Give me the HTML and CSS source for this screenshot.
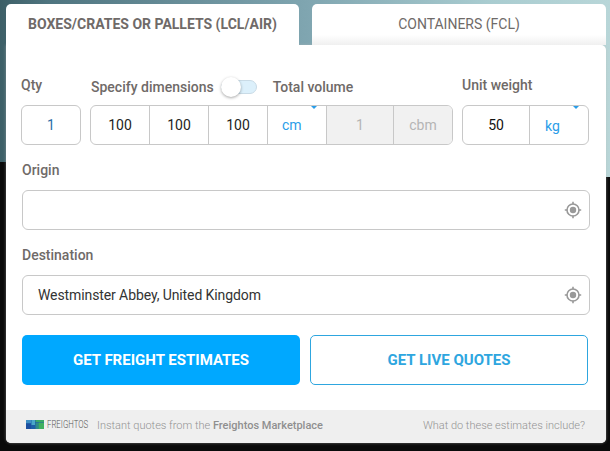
FILE: index.html
```html
<!DOCTYPE html>
<html lang="en">
<head>
<meta charset="utf-8">
<title>Freight estimates</title>
<link rel="stylesheet" href="styles.css">
</head>
<body>
<div class="widget">
  <div class="tabs">
    <div class="tab tab-active">BOXES/CRATES OR PALLETS (LCL/AIR)</div>
    <div class="tab tab-idle">CONTAINERS (FCL)</div>
  </div>
  <div class="card">
    <div class="form">
      <div class="units">
        <div class="col col-qty">
          <div class="label label-qty">Qty</div>
          <div class="box"><div class="cell cell-qty">1</div></div>
        </div>
        <div class="col col-dims">
          <div class="label-row">
            <span class="label">Specify dimensions</span>
            <span class="toggle"><span class="knob"></span></span>
            <span class="label">Total volume</span>
          </div>
          <div class="box">
            <div class="cell cell-dim">100</div>
            <div class="cell cell-dim">100</div>
            <div class="cell cell-dim">100</div>
            <div class="cell cell-unit caret">cm</div>
            <div class="cell cell-vol muted">1</div>
            <div class="cell cell-cbm muted">cbm</div>
          </div>
        </div>
        <div class="col col-weight">
          <div class="label label-qty">Unit weight</div>
          <div class="box">
            <div class="cell cell-w">50</div>
            <div class="cell cell-kg caret">kg</div>
          </div>
        </div>
      </div>

      <div class="label field-label">Origin</div>
      <div class="field">
        <span class="field-text"></span>
        <svg class="locate" viewBox="0 0 18 18" aria-hidden="true"><circle cx="9" cy="9" r="6" fill="none" stroke="#999" stroke-width="1.6"/><circle cx="9" cy="9" r="3.2" fill="#999"/><path d="M9 .8v2.4M9 14.8v2.4M.8 9h2.4M14.8 9h2.4" stroke="#999" stroke-width="1.6"/></svg>
      </div>

      <div class="label field-label field-label-2">Destination</div>
      <div class="field">
        <span class="field-text">Westminster Abbey, United Kingdom</span>
        <svg class="locate" viewBox="0 0 18 18" aria-hidden="true"><circle cx="9" cy="9" r="6" fill="none" stroke="#999" stroke-width="1.6"/><circle cx="9" cy="9" r="3.2" fill="#999"/><path d="M9 .8v2.4M9 14.8v2.4M.8 9h2.4M14.8 9h2.4" stroke="#999" stroke-width="1.6"/></svg>
      </div>

      <div class="actions">
        <div class="btn btn-primary">GET FREIGHT ESTIMATES</div>
        <div class="btn btn-outline">GET LIVE QUOTES</div>
      </div>
    </div>
    <div class="foot">
      <div class="foot-left">
        <svg class="logo" viewBox="0 0 18 9" aria-hidden="true">
          <rect x="0" y="0" width="18" height="9" fill="#1f5fa8"/>
          <rect x="0" y="0" width="5" height="3" fill="#3f8fc4"/>
          <rect x="0" y="4" width="5" height="5" fill="#1c4fa0"/>
          <rect x="5.5" y="0" width="3.5" height="5" fill="#49a7c9"/>
          <rect x="5.5" y="5.5" width="3.5" height="3.5" fill="#1c5fa8"/>
          <rect x="9.5" y="0" width="8.5" height="2" fill="#3aa868"/>
          <rect x="9.5" y="2.5" width="3" height="6.5" fill="#2f8a8a"/>
          <rect x="12.5" y="2.5" width="5.5" height="6.5" fill="#3fb060"/>
        </svg>
        <span class="brand">FREIGHTOS</span>
        <span class="foot-text">Instant quotes from the <b>Freightos Marketplace</b></span>
      </div>
      <span class="foot-text">What do these estimates include?</span>
    </div>
  </div>
</div>
</body>
</html>
```
FILE: styles.css
```css
* { box-sizing: border-box; }
html, body { margin: 0; height: 100%; }
body {
  width: 610px;
  height: 451px;
  overflow: hidden;
  font-family: Roboto, "Liberation Sans", sans-serif;
  background:
    linear-gradient(181.4deg, transparent 177px, #0a0a0a 177px),
    linear-gradient(90deg, #3d5f67 0, #4f7580 8%, #7fa5b0 50%, #a9ccd0 80%, #b8d6d8 100%);
}
.widget {
  margin-left: 6px;
  padding-top: 4px;
  width: 600px;
}
.tabs { display: flex; gap: 13px; height: 41px; position: relative; z-index: 2; }
.tab {
  width: 293px;
  height: 41px;
  border-radius: 5px 5px 0 0;
  display: flex;
  align-items: center;
  justify-content: center;
  font-size: 14px;
  color: #6f6a68;
  background: #fff;
  padding-bottom: 2px;
}
.tab-active { font-weight: 700; height: 44px; padding-bottom: 5px; }
.tab-idle { background: linear-gradient(180deg, #fff 75%, #f0f0f0 100%); width: 294px; }
.card {
  background: #fff;
  border-radius: 0 5px 5px 5px;
  height: 398px;
  display: flex;
  flex-direction: column;
  justify-content: space-between;
  box-shadow: 0 0 3px rgba(190,190,190,.55);
}
.form { padding: 30px 16px 0 15px; }
.units { display: flex; }
.col { display: flex; flex-direction: column; }
.col-qty { width: 69px; }
.col-dims { width: 372px; }
.col-weight { width: 127px; }
.label { font-size: 14px; font-weight: 500; color: #6f6a68; }
.label-row { display: flex; align-items: center; height: 23px; padding-left: 1px; }
.label-qty { height: 23px; line-height: 20px; }
.toggle {
  width: 36px;
  height: 14px;
  margin: 0 16px 0 7px;
  border-radius: 7px;
  background: #dcf0fb;
  border: 1px solid #c9dbe6;
  position: relative;
}
.knob {
  position: absolute;
  left: -1px;
  top: -4px;
  width: 20px;
  height: 20px;
  border-radius: 50%;
  background: #fff;
  box-shadow: 0 1px 3px rgba(0,0,0,.35);
}
.box {
  display: flex;
  height: 40px;
  margin-top: 7px;
  border: 1px solid #c8c8c8;
  border-radius: 6px;
  overflow: hidden;
}
.col-qty .box { width: 60px; }
.col-dims .box { width: 363px; }
.col-weight .box { width: 127px; }
.cell {
  height: 100%;
  display: flex;
  align-items: center;
  justify-content: center;
  font-size: 14px;
  color: #222;
  border-right: 1px solid #c8c8c8;
  position: relative;
}
.cell:last-child { border-right: 0; }
.cell-qty { width: 100%; color: #2c6fa8; }
.cell-dim { width: 59px; }
.cell-unit, .cell-kg { color: #2a9de8; }
.cell-unit { width: 59px; justify-content: flex-start; padding-left: 14px; }
.cell-vol { width: 67px; }
.cell-cbm { flex: 1; }
.muted { background: #f1f1f1; color: #b5b5b5; }
.cell-w { width: 67px; color: #111; }
.cell-kg { flex: 1; justify-content: flex-start; padding-left: 15px; padding-top: 2px; }
.caret::after {
  content: "";
  position: absolute;
  top: 0;
  right: 9px;
  border: 3px solid transparent;
  border-top: 3px solid #2a9de8;
  border-bottom: 0;
}
.field-label { margin: 16px 0 0 1px; height: 20px; line-height: 18px; }
.field-label-2 { margin-top: 16px; }
.field {
  display: flex;
  align-items: center;
  justify-content: space-between;
  height: 40px;
  margin: 9px 0 0 1px;
  padding: 0 7px 0 15px;
  border: 1px solid #c8c8c8;
  border-radius: 6px;
}
.field-text { font-size: 14px; color: #333; letter-spacing: -.1px; }
.locate { width: 18px; height: 18px; }
.actions { display: flex; gap: 10px; margin: 20px 0 0 1px; }
.btn {
  width: 278px;
  height: 50px;
  border-radius: 5px;
  display: flex;
  align-items: center;
  justify-content: center;
  font-size: 15px;
  font-weight: 700;
}
.btn-primary { background: #00a8ff; color: #fff; }
.btn-outline { border: 1px solid #2ea6df; color: #2ea6df; }
.foot {
  height: 33px;
  background: #efefef;
  border-radius: 0 0 5px 5px;
  display: flex;
  align-items: center;
  justify-content: space-between;
  padding: 0 21px 2px 20px;
}
.foot-left { display: flex; align-items: center; }
.logo { width: 18px; height: 9px; margin-bottom: 2px; }
.brand {
  width: 41px;
  margin: 0 9px 2px 3px;
  font-size: 11px;
  font-weight: 300;
  color: #555;
  white-space: nowrap;
  transform: scaleX(.71);
  transform-origin: left center;
}
.foot-text { font-size: 11px; color: #939393; font-weight: 300; }
.foot-text b { font-weight: 500; color: #8f8f8f; }
```
